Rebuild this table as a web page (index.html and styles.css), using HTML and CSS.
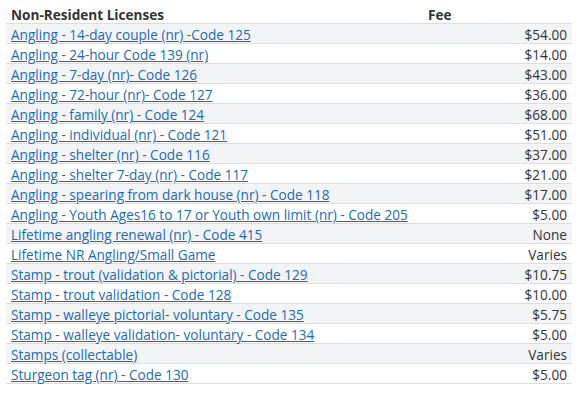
FILE: index.html
```html
<!DOCTYPE html>
<html>
<head>
    <title>Non-Resident Licenses</title>
    <link rel="stylesheet" href="styles.css">
</head>
<body>
    <table class="fees">
        <thead>
            <tr>
                <th class="name">Non-Resident Licenses</th>
                <th class="fee">Fee</th>
            </tr>
        </thead>
        <tbody>
            <tr><td><a href="#">Angling - 14-day couple (nr) -Code 125</a></td><td class="amount">$54.00</td></tr>
            <tr><td><a href="#">Angling - 24-hour Code 139 (nr)</a></td><td class="amount">$14.00</td></tr>
            <tr><td><a href="#">Angling - 7-day (nr)- Code 126</a></td><td class="amount">$43.00</td></tr>
            <tr><td><a href="#">Angling - 72-hour (nr)- Code 127</a></td><td class="amount">$36.00</td></tr>
            <tr><td><a href="#">Angling - family (nr) - Code 124</a></td><td class="amount">$68.00</td></tr>
            <tr><td><a href="#">Angling - individual (nr) - Code 121</a></td><td class="amount">$51.00</td></tr>
            <tr><td><a href="#">Angling - shelter (nr) - Code 116</a></td><td class="amount">$37.00</td></tr>
            <tr><td><a href="#">Angling - shelter 7-day (nr) - Code 117</a></td><td class="amount">$21.00</td></tr>
            <tr><td><a href="#">Angling - spearing from dark house (nr) - Code 118</a></td><td class="amount">$17.00</td></tr>
            <tr><td><a href="#">Angling - Youth Ages16 to 17 or Youth own limit (nr) - Code 205</a></td><td class="amount">$5.00</td></tr>
            <tr><td><a href="#">Lifetime angling renewal (nr) - Code 415</a></td><td class="amount">None</td></tr>
            <tr><td><a href="#">Lifetime NR Angling/Small Game</a></td><td class="amount">Varies</td></tr>
            <tr><td><a href="#">Stamp - trout (validation &amp; pictorial) - Code 129</a></td><td class="amount">$10.75</td></tr>
            <tr><td><a href="#">Stamp - trout validation - Code 128</a></td><td class="amount">$10.00</td></tr>
            <tr><td><a href="#">Stamp - walleye pictorial- voluntary - Code 135</a></td><td class="amount">$5.75</td></tr>
            <tr><td><a href="#">Stamp - walleye validation- voluntary - Code 134</a></td><td class="amount">$5.00</td></tr>
            <tr><td><a href="#">Stamps (collectable)</a></td><td class="amount">Varies</td></tr>
            <tr><td><a href="#">Sturgeon tag (nr) - Code 130</a></td><td class="amount">$5.00</td></tr>
        </tbody>
    </table>
</body>
</html>
```

FILE: styles.css
```css
body {
    margin: 4px 9px 0 6px;
    font-family: "Open Sans", Arial, sans-serif;
    font-size: 13.6px;
    color: #333;
    background-color: #fff;
}

.fees {
    width: 566px;
    border-collapse: collapse;
}

.fees th,
.fees td {
    padding: 2px 5px 0;
    line-height: 17px;
    border-bottom: 1px solid #ddd;
}

.fees th {
    font-weight: bold;
    text-align: left;
    color: #333;
}

.fees th.name {
    width: 407px;
}

.fees tbody tr:nth-child(odd) {
    background-color: #f3f4f6;
}

.fees a {
    color: #1c6bb0;
}

.fees td.amount {
    text-align: right;
    color: #333;
}
```
